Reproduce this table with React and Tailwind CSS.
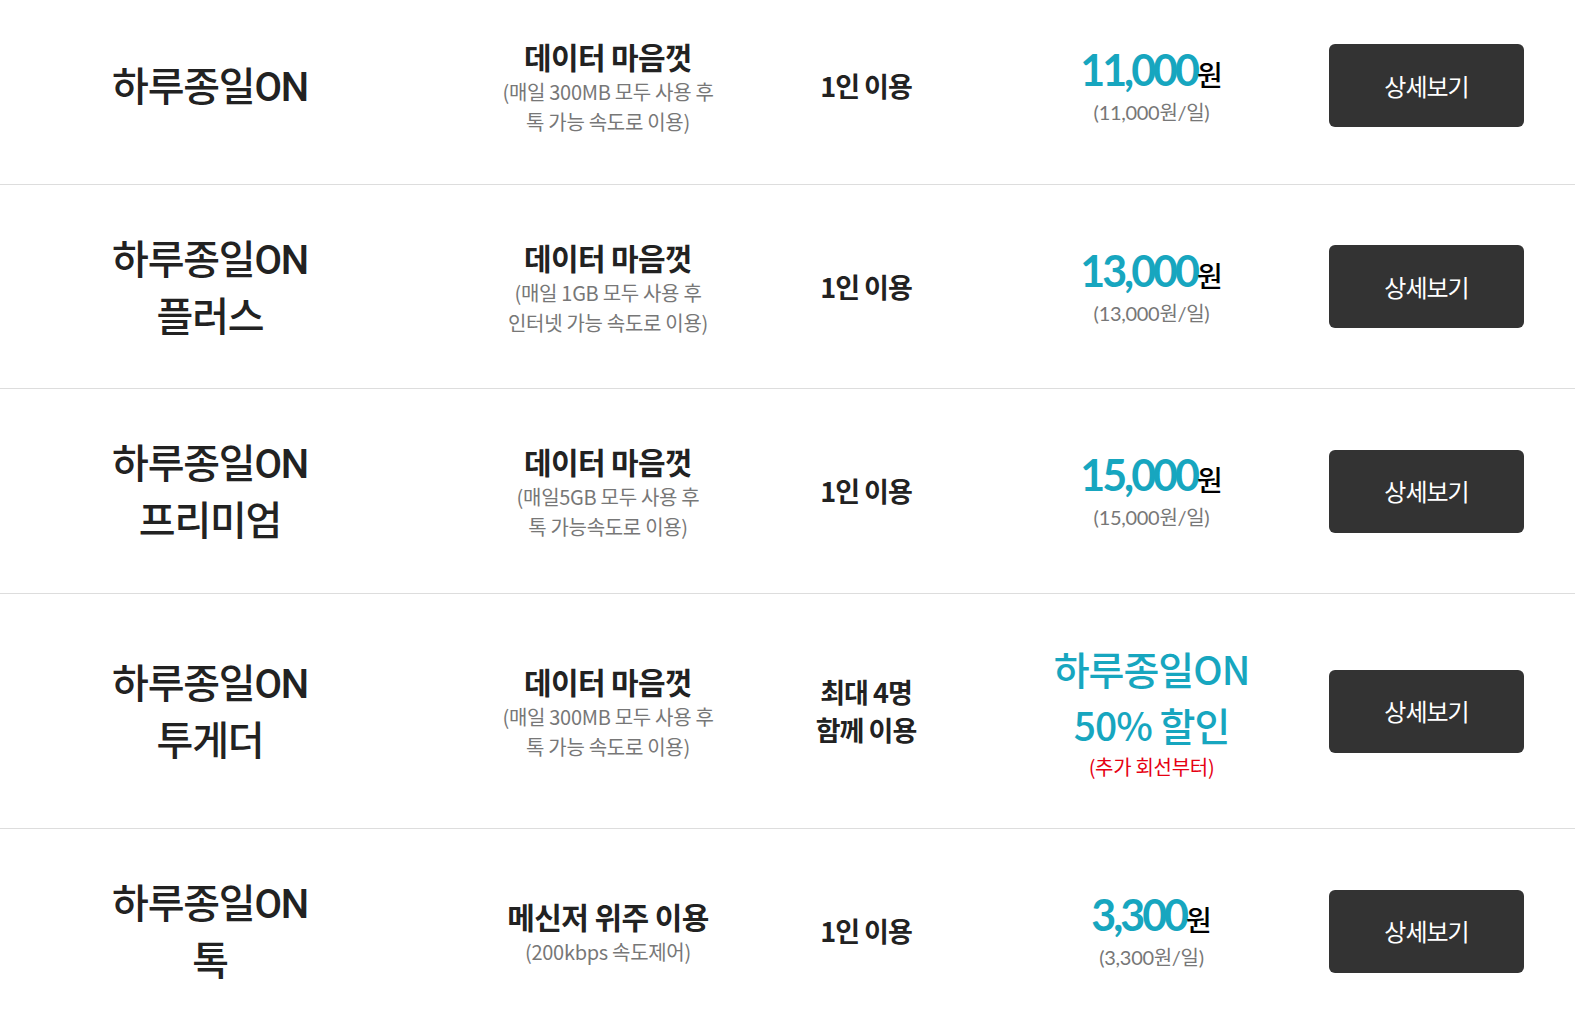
const plans = [
  {
    name: ["하루종일ON"],
    data: "데이터 마음껏",
    desc: ["(매일 300MB 모두 사용 후", "톡 가능 속도로 이용)"],
    users: ["1인 이용"],
    price: "11,000",
    perDay: "(11,000원/일)",
    h: "h-[198px] -mt-[13px]",
  },
  {
    name: ["하루종일ON", "플러스"],
    data: "데이터 마음껏",
    desc: ["(매일 1GB 모두 사용 후", "인터넷 가능 속도로 이용)"],
    users: ["1인 이용"],
    price: "13,000",
    perDay: "(13,000원/일)",
    h: "h-[204px]",
  },
  {
    name: ["하루종일ON", "프리미엄"],
    data: "데이터 마음껏",
    desc: ["(매일5GB 모두 사용 후", "톡 가능속도로 이용)"],
    users: ["1인 이용"],
    price: "15,000",
    perDay: "(15,000원/일)",
    h: "h-[205px]",
  },
  {
    name: ["하루종일ON", "투게더"],
    data: "데이터 마음껏",
    desc: ["(매일 300MB 모두 사용 후", "톡 가능 속도로 이용)"],
    users: ["최대 4명", "함께 이용"],
    discount: true,
    h: "h-[235px]",
  },
  {
    name: ["하루종일ON", "톡"],
    data: "메신저 위주 이용",
    desc: ["(200kbps 속도제어)"],
    users: ["1인 이용"],
    price: "3,300",
    perDay: "(3,300원/일)",
    h: "h-[205px]",
  },
];

const kr = "font-['Noto_Sans_CJK_KR',sans-serif]";
const nameFont = "font-['Roboto','Noto_Sans_CJK_KR',sans-serif]";
const latoFont = "font-['Lato','Noto_Sans_CJK_KR',sans-serif]";

const PlanRow = ({ plan }) => (
  <div className={`flex items-center border-b border-[#dddddd] ${plan.h}`}>
    <div className={`w-[420px] pt-[4px] text-center text-[40px] leading-[57px] font-medium tracking-[-1.2px] text-[#222] ${nameFont}`}>
      {plan.name.map((line) => (
        <div key={line}>{line}</div>
      ))}
    </div>
    <div className={`w-[376px] text-center ${kr}`}>
      <div className="text-[30px] leading-[42px] font-bold tracking-[-0.6px] text-[#222]">{plan.data}</div>
      {plan.desc.map((line) => (
        <div key={line} className="text-[20px] leading-[30px] tracking-[-0.3px] text-[#777]">
          {line}
        </div>
      ))}
    </div>
    <div className={`w-[140px] text-center text-[27px] leading-[38px] font-bold tracking-[-1px] text-[#222] ${kr}`}>
      {plan.users.map((line) => (
        <div key={line}>{line}</div>
      ))}
    </div>
    <div className="w-[393px] pl-[38px] text-center">
      {plan.discount ? (
        <div className={kr}>
          <div className="text-[39px] leading-[56px] font-medium tracking-[-1px] text-[#17a6bf]">하루종일ON</div>
          <div className="text-[39px] leading-[56px] font-medium tracking-[-1px] text-[#17a6bf]">50% 할인</div>
          <div className="text-[20px] leading-[30px] tracking-[-0.3px] text-[#e60012]">(추가 회선부터)</div>
        </div>
      ) : (
        <div>
          <div className="leading-[42px]">
            <span className={`text-[43px] font-bold tracking-[-3px] text-[#17a6bf] ${latoFont}`}>{plan.price}</span>
            <span className={`text-[28px] font-medium text-black ${kr}`}>원</span>
          </div>
          <div className={`text-[20px] leading-[22px] tracking-[-0.3px] text-[#777] ${latoFont}`}>{plan.perDay}</div>
        </div>
      )}
    </div>
    <div>
      <button className={`w-[195px] h-[83px] rounded-md bg-[#333333] text-white text-[24px] tracking-[-1px] ${kr}`}>
        상세보기
      </button>
    </div>
  </div>
);

export default function App() {
  return (
    <div className="w-[1575px] h-[1011px] overflow-hidden bg-white">
      {plans.map((plan, i) => (
        <PlanRow key={i} plan={plan} />
      ))}
    </div>
  );
}
